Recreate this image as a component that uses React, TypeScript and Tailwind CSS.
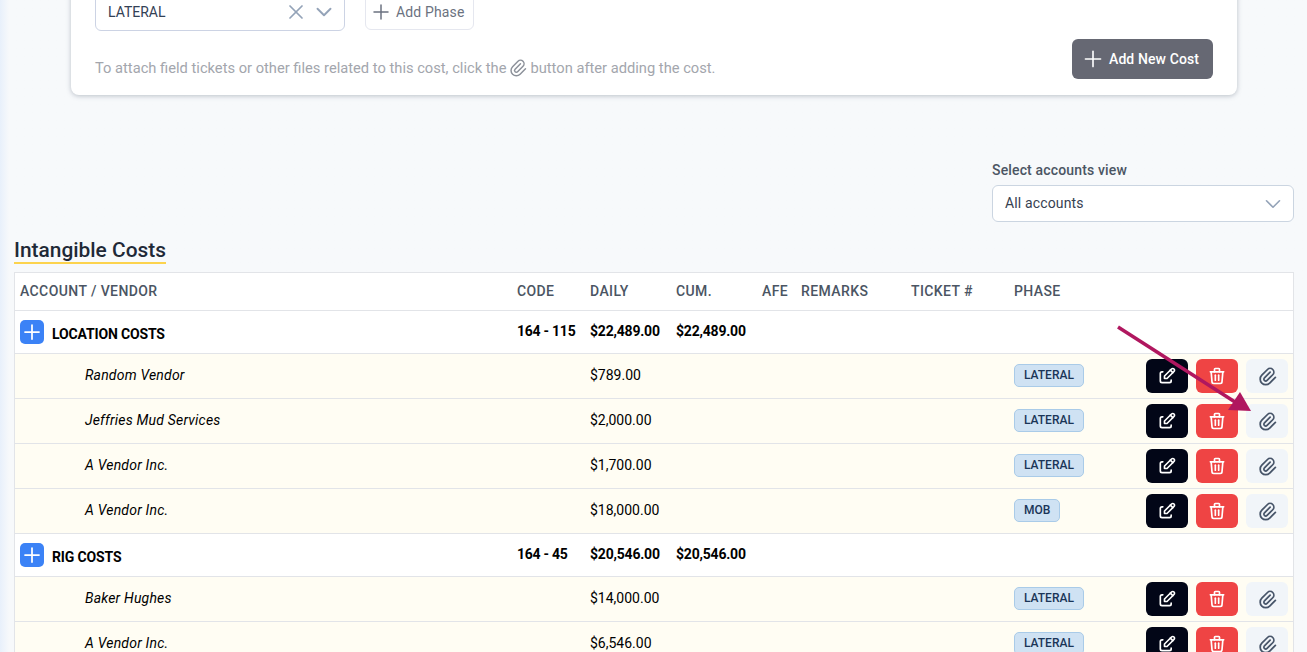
import React from "react";
import { TbChevronDown, TbEdit, TbPaperclip, TbPlus, TbTrash, TbX } from "react-icons/tb";

interface VendorRow {
	vendor: string;
	daily: string;
	phase: string;
}

interface CostGroup {
	name: string;
	code: string;
	daily: string;
	cum: string;
	rows: VendorRow[];
}

const groups: CostGroup[] = [
	{
		name: "LOCATION COSTS",
		code: "164 - 115",
		daily: "$22,489.00",
		cum: "$22,489.00",
		rows: [
			{ vendor: "Random Vendor", daily: "$789.00", phase: "LATERAL" },
			{ vendor: "Jeffries Mud Services", daily: "$2,000.00", phase: "LATERAL" },
			{ vendor: "A Vendor Inc.", daily: "$1,700.00", phase: "LATERAL" },
			{ vendor: "A Vendor Inc.", daily: "$18,000.00", phase: "MOB" },
		],
	},
	{
		name: "RIG COSTS",
		code: "164 - 45",
		daily: "$20,546.00",
		cum: "$20,546.00",
		rows: [
			{ vendor: "Baker Hughes", daily: "$14,000.00", phase: "LATERAL" },
			{ vendor: "A Vendor Inc.", daily: "$6,546.00", phase: "LATERAL" },
		],
	},
];

const headers = ["CODE", "DAILY", "CUM.", "AFE", "REMARKS", "TICKET #", "PHASE"];

function ActionButtons() {
	return (
		<div className="flex gap-2">
			<button className="flex h-[34px] w-[42px] items-center justify-center rounded-md bg-[#020617] text-white">
				<TbEdit size={20} />
			</button>
			<button className="flex h-[34px] w-[42px] items-center justify-center rounded-md bg-[#ef4444] text-white">
				<TbTrash size={20} />
			</button>
			<button className="flex h-[34px] w-[42px] items-center justify-center rounded-md bg-[#f1f5f9] text-[#475569]">
				<TbPaperclip size={21} />
			</button>
		</div>
	);
}

function CostRows({ group }: { group: CostGroup }) {
	return (
		<>
			<div className="grid h-[43px] grid-cols-[497px_73px_86px_86px_39px_110px_103px_132px_1fr] items-center border-b border-[#e2e4e8] bg-white pl-[5px] text-[14px] font-bold text-black">
				<div className="flex items-center gap-2">
					<span className="flex h-6 w-6 items-center justify-center rounded-[5px] bg-[#3b82f6] text-white">
						<TbPlus size={24} strokeWidth={1.75} />
					</span>
					<span className="mt-[5px] tracking-[-0.15px]">{group.name}</span>
				</div>
				<div className="-mt-[2px] tracking-[-0.25px]">{group.code}</div>
				<div className="-mt-[2px] tracking-[-0.2px]">{group.daily}</div>
				<div className="-mt-[2px] tracking-[-0.2px]">{group.cum}</div>
			</div>
			{group.rows.map((row, i) => (
				<div
					key={i}
					className="grid h-[45px] grid-cols-[497px_73px_86px_86px_39px_110px_103px_132px_1fr] items-center border-b border-[#e2e4e8] bg-[#fffdf3] pl-[5px] text-[14px] text-black"
				>
					<div className="-mt-[2px] pl-[65px] italic tracking-[0.2px]">{row.vendor}</div>
					<div />
					<div className="-mt-[2px]">{row.daily}</div>
					<div />
					<div />
					<div />
					<div />
					<div className="-mt-[2px]">
						<span className="inline-block rounded-[5px] border border-[#a9cbe8] bg-[#cfe2f3] px-[9px] py-[2px] text-[12px] font-medium leading-[17px] text-[#1a3557]">
							{row.phase}
						</span>
					</div>
					<ActionButtons />
				</div>
			))}
		</>
	);
}

export default function App() {
	return (
		<div
			className="relative h-[652px] overflow-hidden bg-[#f7f9fb] bg-gradient-to-r from-[#e8f0fb] from-0% to-[#f7f9fb] to-[0.7%] text-[14px] text-[#374151]"
			style={{ fontFamily: "Roboto, sans-serif" }}
		>
			<div className="ml-[71px] -mt-[20px] h-[115px] w-[1166px] rounded-lg bg-white px-6 shadow-[0_1px_5px_rgba(71,85,105,0.35)]">
				<div className="flex items-end gap-5 pt-[12px]">
					<div className="flex h-[39px] w-[250px] items-center justify-between rounded-md border border-[#ccd3e4] bg-white pl-3 pr-[7px] pt-[3px] text-[#334155]">
						<span className="-mt-[1px]">LATERAL</span>
						<div className="-mt-[3px] flex items-center gap-[3px] text-[#94a3b8]">
							<TbX size={24} strokeWidth={1.75} />
							<TbChevronDown size={26} strokeWidth={1.75} />
						</div>
					</div>
					<button className="mb-[1px] flex h-[37px] w-[109px] items-center gap-[3px] rounded-md border border-[#e5e7ef] pl-[3px] pt-[2px] tracking-[0.15px] text-[#6b7280]">
						<TbPlus size={24} strokeWidth={1.5} className="-mt-[2px]" />
						Add Phase
					</button>
				</div>
				<div className="mt-[8px] flex items-start justify-between">
					<p className="mt-[19px] flex items-center text-[14.7px] leading-5 text-[#a3a6ad]">
						To attach field tickets or other files related to this cost, click the
						<TbPaperclip size={20} strokeWidth={1.75} className="mx-[2px] text-[#8b9099]" />
						button after adding the cost.
					</p>
					<button className="flex h-10 w-[141px] items-center gap-[3px] rounded-md bg-[#666873] pl-2 text-[14px] font-medium tracking-[0.1px] text-white">
						<TbPlus size={26} strokeWidth={1.5} />
						Add New Cost
					</button>
				</div>
			</div>

			<div className="ml-[992px] mt-[66px] w-[302px]">
				<div className="mb-[6px] text-[14px] font-medium leading-[18px] tracking-[0.15px] text-[#4b5563]">
					Select accounts view
				</div>
				<div className="flex h-[37px] items-center justify-between rounded-md border border-[#cbd5e1] bg-white pl-3 pr-[7px] tracking-[0.15px] text-[#374151]">
					All accounts
					<TbChevronDown size={26} strokeWidth={1.5} className="text-[#94a3b8]" />
				</div>
			</div>

			<div className="ml-[14px] mt-[16px] inline-block border-b-2 border-[#fcd34d] text-[20.9px] font-medium leading-[24px] text-[#1f2937]">
				Intangible Costs
			</div>

			<div className="ml-[14px] mr-[13px] mt-2 border border-[#e2e4e8] bg-white">
				<div className="grid h-[38px] grid-cols-[497px_73px_86px_86px_39px_110px_103px_132px_1fr] items-center border-b border-[#e2e4e8] pl-[5px] text-[14px] font-medium tracking-[0.4px] text-[#4b5563]">
					<div>ACCOUNT / VENDOR</div>
					{headers.map((h) => (
						<div key={h}>{h}</div>
					))}
				</div>
				{groups.map((g) => (
					<CostRows key={g.name} group={g} />
				))}
			</div>

			<svg className="absolute left-[1110px] top-[320px]" width="150" height="100" viewBox="0 0 150 100">
				<line x1="8" y1="7" x2="125" y2="82" stroke="#b0175f" strokeWidth="3.5" />
				<polygon points="141,91 118,90 130,72" fill="#b0175f" />
			</svg>
		</div>
	);
}
